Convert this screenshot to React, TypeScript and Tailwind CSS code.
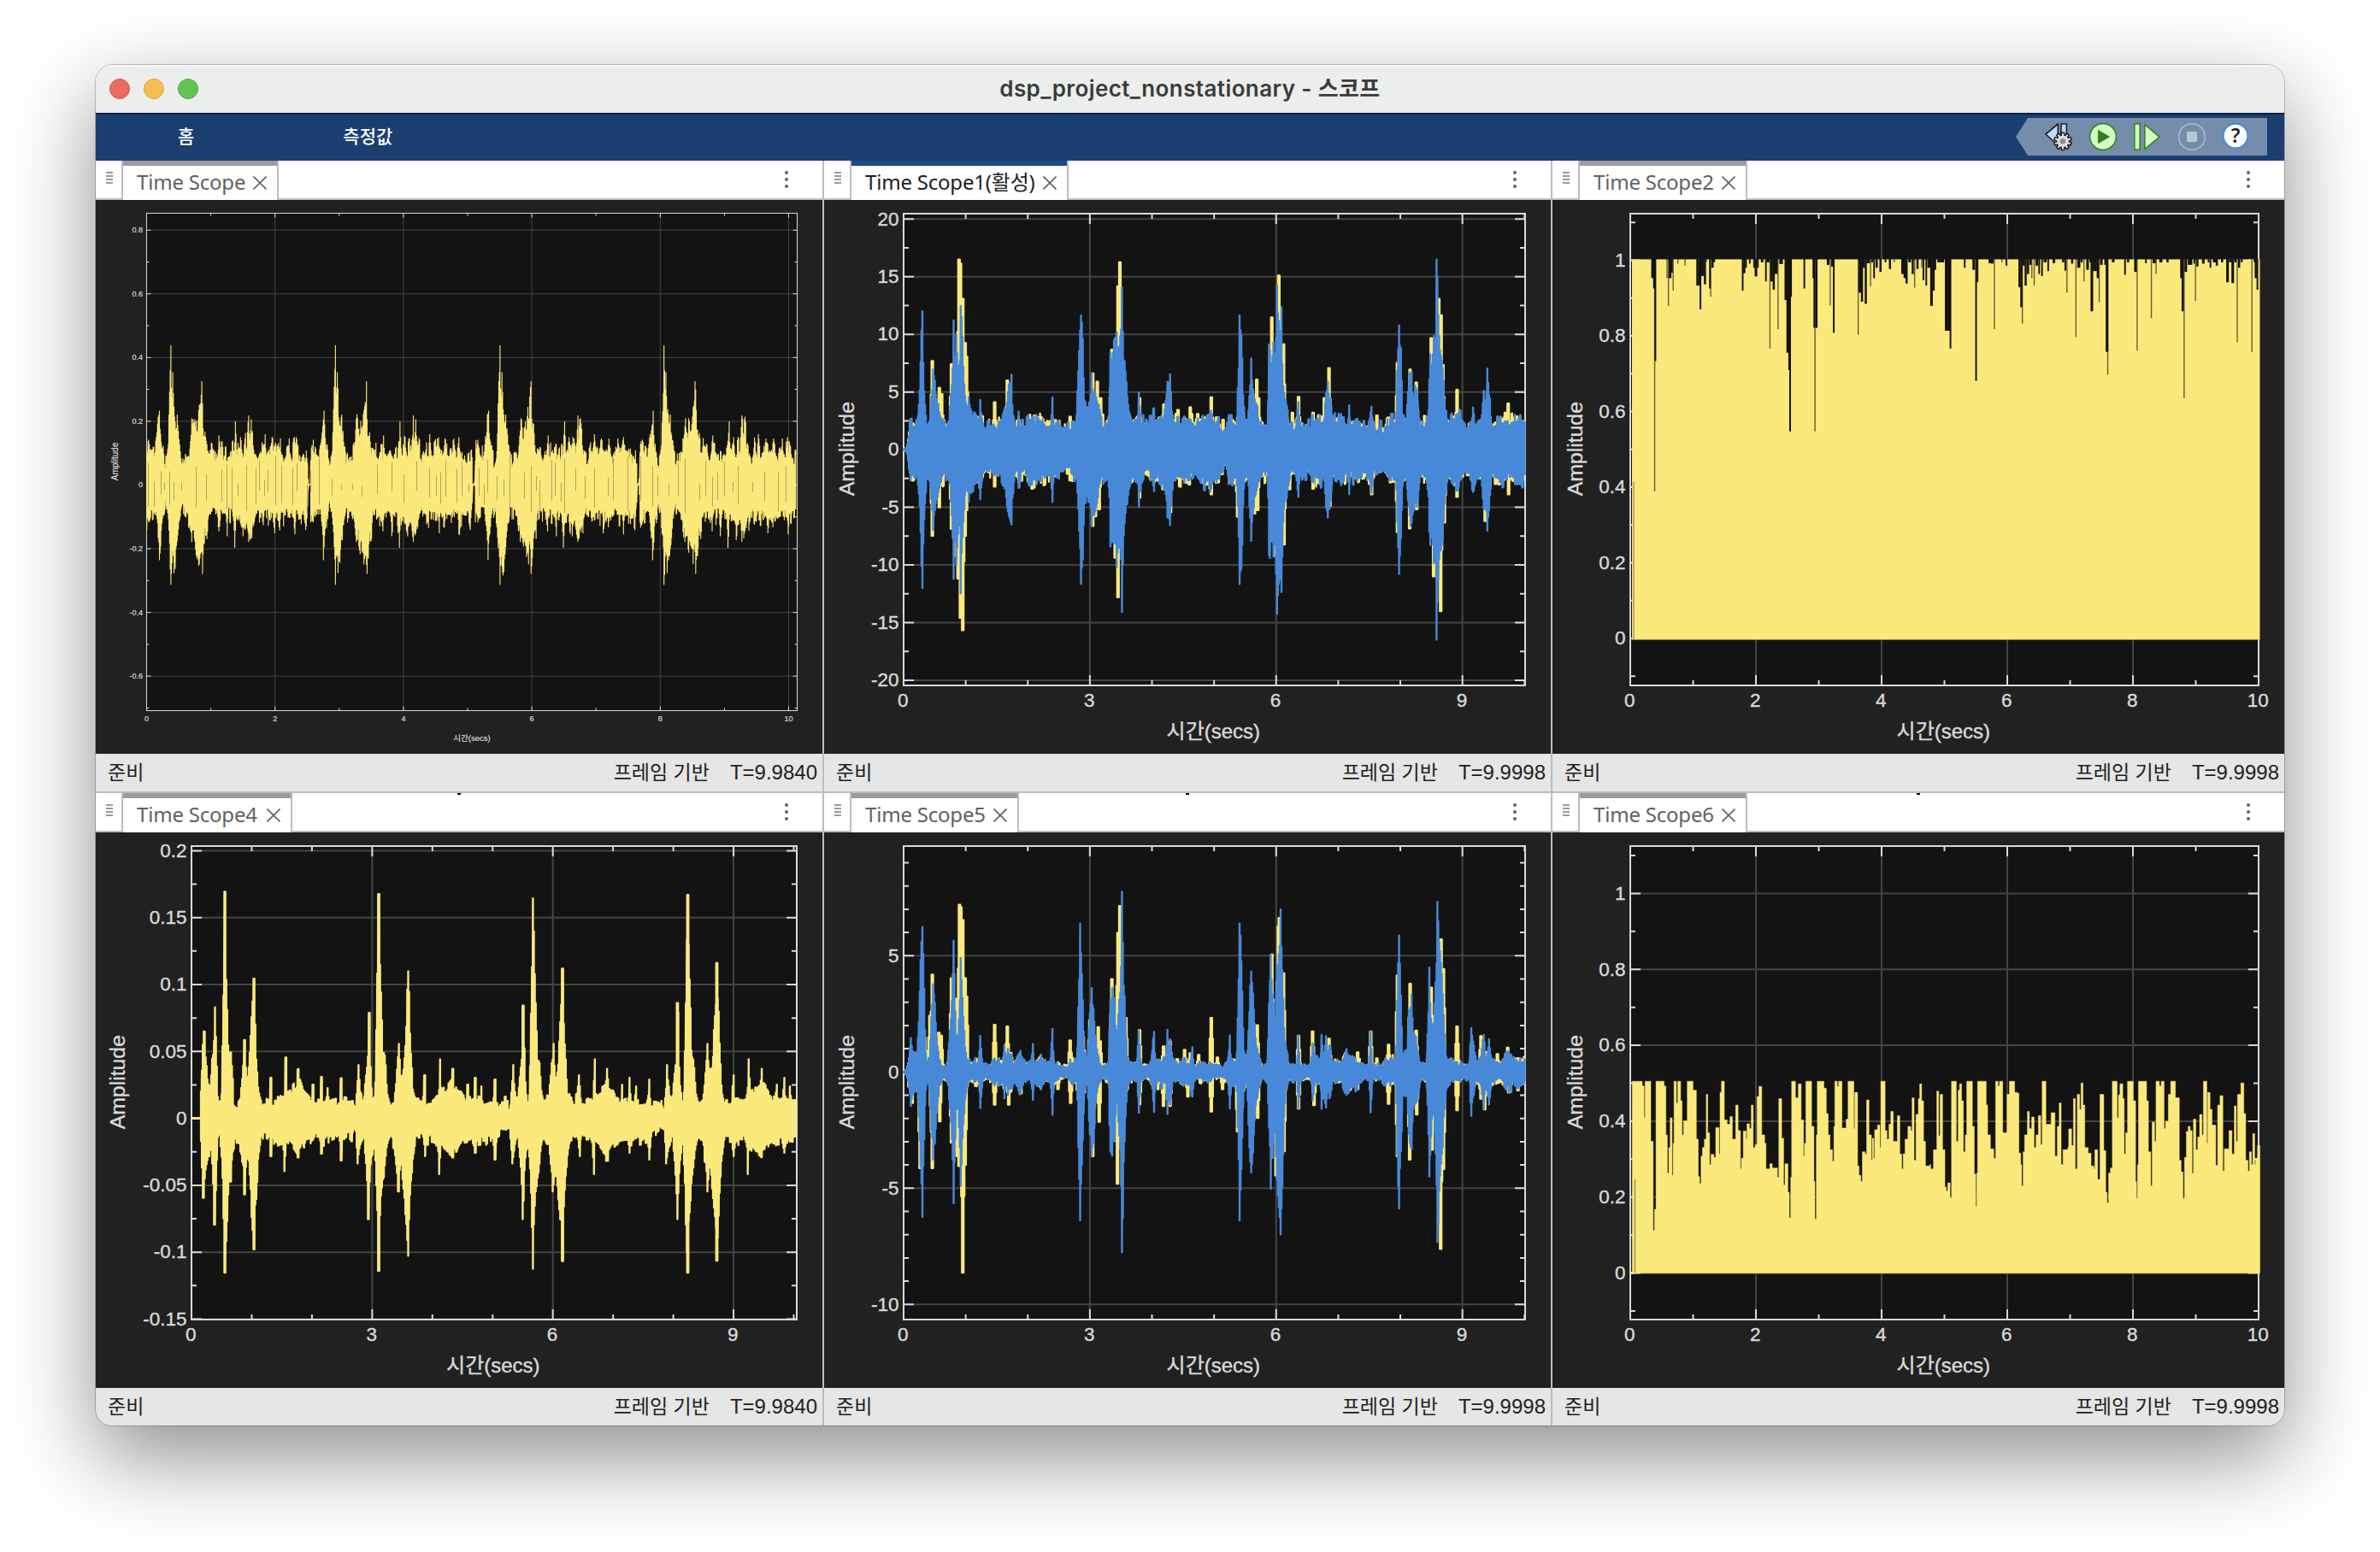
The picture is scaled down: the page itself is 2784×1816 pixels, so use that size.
import React from "react";

type Pt = [number, number];
type Spike = [number, number];

/* Maps recorder units to page units: page = origin + value / scale. */
interface Grid {
  ox: number;
  oy: number;
  sx: number;
  sy: number;
}

function rng(seed: number) {
  let s = seed;
  return () => {
    s = (s * 1664525 + 1013904223) % 4294967296;
    return s / 4294967296;
  };
}

function parse(text: string): Pt[] {
  return text
    .trim()
    .split(/\s+/)
    .map((p) => p.split(":").map(Number) as Pt);
}

function shift(points: Pt[], dx: number): Pt[] {
  return points.map(([x, y]) => [x + dx, y]);
}

/* Reads an envelope column by column; local extremes stay exact, the rest is roughened. */
function sampler(points: Pt[], zero: number, jitter: number, seed: number, step: number) {
  const rand = rng(seed);
  let k = 0;
  let hold = 0;
  let r = rand();
  const peaks = points.filter(([, y], i) => {
    const a = points[i - 1];
    const b = points[i + 1];
    const h = Math.abs(y - zero);
    return a && b && h >= Math.abs(a[1] - zero) && h >= Math.abs(b[1] - zero);
  });
  let p = 0;
  return (x: number) => {
    while (k < points.length - 2 && points[k + 1][0] <= x) k++;
    while (p < peaks.length - 1 && peaks[p][0] < x - step / 2) p++;
    if (hold-- <= 0) {
      r = rand();
      if (rand() < 0.14) r = -0.7 * rand();
      hold = step > 1.5 ? Math.floor(rand() * 3) : Math.floor(rand() * 2);
    }
    if (Math.abs(peaks[p][0] - x) <= step / 2) return peaks[p][1];
    const [x0, y0] = points[k];
    const [x1, y1] = points[k + 1];
    const f = Math.min(1, Math.max(0, (x - x0) / (x1 - x0 || 1)));
    const v = y0 + (y1 - y0) * f;
    const h = Math.abs(v - zero);
    const cut = r * Math.min(h * 0.4, Math.max(jitter, h * (r > 0 ? 0.2 : 0)));
    return v > zero ? v - cut : v + cut;
  };
}

function wave(
  g: Grid,
  zero: number,
  hi: Pt[],
  lo: Pt[],
  from: number,
  to: number,
  step: number,
  jitter: number,
  seed: number,
) {
  const top = sampler(hi, zero, jitter, seed, step);
  const bottom = sampler(lo, zero, jitter, seed + 77, step);
  let d = "";
  for (let x = from; x <= to; x += step) {
    const px = (g.ox + x / g.sx).toFixed(1);
    const a = (g.oy + top(x) / g.sy).toFixed(1);
    const b = (g.oy + bottom(x) / g.sy).toFixed(1);
    d += `${d ? "L" : "M"}${px} ${a}V${b}`;
  }
  return d;
}

function spikes(g: Grid, zero: number, list: Spike[], half = 0.7) {
  return list
    .map(([x, y]) => {
      const px = g.ox + x / g.sx;
      const py = (g.oy + y / g.sy).toFixed(1);
      const mid = (g.oy + (zero + (y - zero) * 0.62) / g.sy).toFixed(1);
      const pz = (g.oy + zero / g.sy).toFixed(1);
      const l = (px - half).toFixed(1);
      const r = (px + half).toFixed(1);
      const wide = half > 0.8;
      const ll = (px - half - 1).toFixed(1);
      const rr = (px + half + 1).toFixed(1);
      return wide ? `M${ll} ${pz}V${mid}H${l}V${py}H${r}V${mid}H${rr}V${pz}Z` : `M${l} ${pz}V${py}H${r}V${pz}Z`;
    })
    .join("");
}

const mirror = (points: Pt[], zero: number): Pt[] => points.map(([x, y]) => [x, 2 * zero - y]);

/* Keeps only the noise floor of an envelope. */
const floorOf = (points: Pt[], zero: number, limit: number): Pt[] =>
  points.map(([x, y]) => [x, zero - Math.min(limit, zero - y)]);

const YELLOW = "#fbe97b";
const BLUE = "#4789d8";
const INK = "#d9d9d9";

/* ---------- Trace data ---------- */

const G1: Grid = { ox: 110, oy: 230, sx: 1.823, sy: 2.2085 };
const beat1Hi = parse(`112:650 117:628 122:650 128:655 134:610 137:560 140:553 143:630 147:635 150:682 155:660 158:640 161:505 164:384 166:470 168:454 170:530 174:572 177:563 180:600 184:640 188:682 195:660 203:655 206:605 209:573 213:605 218:580 221:590 224:538 227:532 230:477 233:597 237:602 240:640 250:645 258:658 264:655 267:617 270:650 280:655 290:660 298:645 302:581 305:645 312:622 317:655 322:625 326:645 330:566 332:630 335:575 338:605 342:640 350:668 358:635 362:655 365:614 368:655 381:625 390:650 397:625 405:665 416:625 422:662 427:622 432:645 440:668 453:656 456:680 457:742 461:742`);
const beat1Lo = parse(`112:842 117:842 122:830 132:825 136:880 139:940 141:905 145:850 152:805 158:850 161:910 164:1003 167:940 170:973 174:945 178:905 182:850 187:820 195:830 204:850 208:893 213:885 218:920 222:935 225:950 228:925 231:975 234:925 237:880 241:885 244:840 250:830 262:835 266:865 269:830 281:835 284:878 287:825 297:840 300:908 303:840 312:850 318:878 325:860 330:892 334:888 340:860 348:830 360:840 370:835 382:840 385:870 388:840 395:855 400:840 412:830 425:835 428:873 431:835 448:835 452:862 456:800 457:745 461:745`);
const repeat = (p: Pt[], period: number, n: number) =>
  Array.from({ length: n }, (_, i) => shift(p, i * period)).flat();
const hi1 = repeat(beat1Hi, 350.7, 4);
const lo1 = repeat(beat1Lo, 350.7, 4);
const trace1 = wave(G1, 745, hi1, lo1, 112.5, 1497, 1.35, 28, 11);

const streaks1 = (() => {
  const rand = rng(5);
  let a = "";
  for (let x = 115; x < 1494; x += 6 + rand() * 26) {
    const px = Math.round(G1.ox + x / G1.sx) + 0.5;
    const y0 = G1.oy + (670 + rand() * 80) / G1.sy;
    const y1 = G1.oy + (755 + rand() * 65) / G1.sy;
    a += `M${px} ${y0.toFixed(1)}V${y1.toFixed(1)}`;
  }
  return a;
})();

const G2: Grid = { ox: 960, oy: 180, sx: 1.823, sy: 2.063 };
const hi2 = parse(`177:713 184:708 187:680 190:645 193:640 200:645 206:640 211:560 214:440 217:380 220:540 223:600 227:650 232:640 236:580 240:520 243:535 246:565 250:590 256:625 262:640 270:650 275:640 278:560 281:490 284:402 287:500 290:437 294:510 296:540 299:367 302:440 305:520 309:605 313:600 316:588 320:612 333:625 337:635 340:594 346:640 355:655 370:650 385:640 393:610 400:560 406:533 410:600 413:648 420:645 423:622 426:645 432:650 440:645 445:635 460:630 470:632 480:640 488:645 491:640 494:588 497:645 508:645 520:660 530:655 545:650 550:520 555:390 558:392 562:575 567:620 573:580 578:530 585:560 592:600 600:640 612:650 615:620 618:480 621:480 626:434 632:430 636:455 640:400 643:322 646:470 652:550 657:610 665:640 673:635 676:630 679:576 683:630 695:655 704:640 707:645 710:614 714:640 725:635 733:610 739:550 742:565 745:532 749:610 755:640 775:635 790:640 800:650 815:630 833:620 840:640 850:645 858:660 863:680 870:630 877:630 887:648 890:540 894:390 898:420 901:580 905:635 911:645 914:560 918:494 922:545 928:590 935:630 942:640 953:650 956:460 960:460 966:455 970:460 974:318 978:380 982:370 986:530 992:590 1000:640 1008:650 1014:650 1018:600 1023:645 1040:655 1052:640 1065:630 1073:640 1077:570 1082:550 1087:600 1091:640 1110:628 1123:645 1127:607 1131:645 1145:640 1160:645 1170:645 1174:610 1179:645 1200:660 1215:640 1227:640 1230:500 1233:414 1237:450 1241:620 1248:645 1253:560 1258:530 1265:560 1272:580 1278:640 1290:650 1296:600 1299:484 1303:520 1308:440 1311:440 1314:255 1317:350 1320:440 1326:480 1331:600 1340:645 1350:630 1360:625 1375:650 1387:650 1391:612 1396:645 1409:640 1413:572 1418:580 1422:518 1427:600 1432:645 1450:635 1465:640 1480:630 1492:630 1503:640`);
const blue2 = wave(G2, 714, hi2, mirror(hi2, 714), 177, 1503, 1.9, 20, 21);
const floor2 = floorOf(hi2, 714, 80);
const yellow2 = wave(G2, 714, floor2, mirror(floor2, 714), 177, 1503, 1.9, 20, 301);
const yHi2: Spike[] = [[238,500],[253,565],[258,580],[279,508],[295,255],[298,265],[303,350],[308,457],[311,490],[371,600],[398,547],[532,635],[580,530],[590,550],[597,590],[621,473],[638,262],[634,320],[680,590],[732,605],[762,618],[788,612],[804,628],[833,588],[846,636],[858,642],[930,545],[934,590],[962,395],[977,294],[987,460],[1006,625],[1019,587],[1050,625],[1074,590],[1084,517],[1186,632],[1212,637],[1230,505],[1257,521],[1270,552],[1288,633],[1302,445],[1318,350],[1323,390],[1327,510],[1357,570],[1415,600],[1460,625],[1466,603]];
const yLo2: Spike[] = [[238,922],[253,853],[279,905],[286,970],[293,1025],[298,1120],[303,1150],[308,922],[311,860],[371,803],[403,872],[451,808],[532,788],[538,790],[580,898],[586,875],[594,858],[628,975],[634,1070],[680,830],[730,810],[746,865],[786,798],[833,822],[856,773],[889,876],[925,868],[932,860],[970,970],[988,943],[1000,810],[1050,808],[1061,795],[1086,850],[1175,822],[1215,793],[1230,913],[1256,904],[1271,858],[1307,1020],[1322,1104],[1330,890],[1357,828],[1417,886],[1439,797],[1447,798],[1467,822]];

const G5: Grid = { ox: 960, oy: 920, sx: 1.823, sy: 2.0103 };
const hi5 = parse(`177:671 184:665 188:630 193:592 198:620 205:625 209:560 214:360 217:331 220:450 223:600 227:655 232:640 236:530 240:466 244:510 248:590 253:640 260:655 270:650 275:600 280:480 284:363 288:560 292:600 296:500 299:404 303:500 308:600 313:635 320:648 336:645 341:587 346:650 360:655 370:640 380:640 388:645 392:610 396:640 400:618 407:620 412:650 425:622 432:640 442:655 448:645 452:606 456:650 470:632 480:650 490:645 494:571 498:645 510:655 525:660 537:640 547:635 550:450 554:323 558:440 562:620 568:650 573:540 578:475 582:500 587:600 592:630 600:655 614:650 617:490 622:475 627:490 631:620 634:560 640:450 643:248 646:430 650:540 654:630 665:655 675:645 679:576 683:650 700:655 706:640 710:578 714:640 730:640 736:630 739:573 743:615 746:595 750:640 760:650 773:640 787:650 792:614 796:655 815:650 830:650 845:655 858:660 868:645 872:586 876:640 887:645 890:500 894:323 898:440 902:620 909:650 914:500 918:436 922:490 928:600 934:620 942:660 953:645 956:510 960:397 964:480 968:560 973:400 977:340 981:290 984:380 988:540 992:620 1000:655 1015:650 1019:587 1023:650 1040:655 1046:650 1050:605 1054:640 1065:640 1069:585 1073:630 1078:588 1083:630 1086:610 1091:645 1110:650 1121:618 1133:630 1145:640 1160:655 1169:655 1173:577 1177:655 1195:655 1205:640 1215:640 1227:640 1230:450 1233:351 1237:440 1241:630 1250:620 1255:510 1260:490 1265:590 1272:600 1280:655 1292:650 1295:560 1298:426 1302:520 1306:600 1311:480 1316:272 1320:380 1325:450 1330:580 1335:640 1350:650 1365:650 1383:655 1387:569 1391:600 1396:640 1408:635 1413:585 1418:630 1426:595 1431:640 1450:650 1468:625 1480:645 1492:640 1503:640`);
const blue5 = wave(G5, 672, hi5, mirror(hi5, 672), 177, 1503, 1.9, 14, 31);
const floor5 = floorOf(hi5, 672, 45);
const yellow5 = wave(G5, 672, floor5, mirror(floor5, 672), 177, 1503, 1.9, 14, 401);
const yHi5: Spike[] = [[222,592],[233,540],[238,443],[252,580],[257,587],[279,452],[288,500],[296,279],[299,285],[303,315],[308,452],[311,495],[371,561],[398,565],[532,598],[560,590],[574,550],[592,567],[596,600],[621,454],[634,345],[638,282],[651,545],[680,574],[731,612],[745,600],[776,620],[788,628],[806,632],[833,545],[846,638],[931,562],[962,396],[976,330],[978,310],[987,440],[1019,587],[1049,577],[1084,594],[1145,626],[1173,577],[1186,640],[1211,608],[1230,445],[1257,465],[1270,575],[1302,474],[1307,540],[1323,360],[1328,430],[1357,565],[1408,588],[1443,630],[1465,615]];
const yLo5: Spike[] = [[195,745],[212,898],[236,800],[238,898],[254,788],[279,838],[285,860],[291,870],[295,893],[303,1144],[308,890],[371,749],[401,749],[427,722],[506,712],[533,745],[562,720],[580,870],[594,789],[633,935],[680,748],[731,752],[745,752],[783,730],[833,765],[857,712],[889,812],[932,780],[962,818],[971,915],[988,858],[1019,758],[1052,750],[1145,712],[1211,747],[1230,870],[1256,878],[1271,772],[1304,855],[1322,1088],[1328,900],[1357,762],[1416,760],[1408,735],[1467,720],[1487,715]];

const G4: Grid = { ox: 110, oy: 920, sx: 1.823, sy: 2.0103 };
const hi4 = [
  ...parse(`228:700 232:600 235:577 238:625 243:680 246:690 250:680 254:600 258:520 261:600 264:720 268:750 272:720 276:430 279:248 283:460 287:640 291:626 295:650 298:735 305:745 312:733 317:680 321:597 325:660 329:680 333:620 336:545 341:453 345:600 350:700 355:735 365:738 374:735 377:686 380:735 390:740 397:725 406:720 409:638 412:715 425:705 432:690 436:665 440:690 447:715 455:720 464:730 467:702 470:735 482:735 485:684 488:735 495:735 498:710 501:735 515:735 524:735 527:687 530:738 540:740 550:740 555:760`),
  ...repeat(parse(`557:765 560:720 564:656 568:715 575:730 579:680 583:640 587:533 591:700 597:750 600:700 604:430 607:264 611:440 616:610 621:626 625:710 632:740 640:735 645:680 650:606 655:680 660:640 666:540 670:435 675:580 680:710 687:735 700:735 702:730 705:680 708:735 720:735 735:725 738:642 741:715 754:708 762:700 765:665 768:700 780:715 794:735 797:702 800:735 810:730 813:686 816:735 823:735 826:706 829:735 850:738 855:690 858:738 872:740 881:740 885:760`), 329.2, 3),
];
const lo4 = [
  ...parse(`228:850 233:968 238:910 244:870 250:850 254:960 257:1031 260:950 264:840 268:830 273:900 276:1050 279:1144 283:1050 288:930 291:930 295:880 300:830 310:830 317:900 321:960 325:900 329:880 335:1000 341:1089 345:980 350:880 356:830 366:825 374:830 377:870 380:830 393:845 403:840 406:905 410:835 425:855 435:873 443:850 450:840 462:840 470:825 481:835 485:864 489:835 500:838 515:828 523:830 527:880 531:828 545:825 550:835 555:815`),
  ...repeat(parse(`557:800 562:887 567:850 575:830 581:900 585:1018 590:900 597:830 600:900 604:1040 607:1135 612:1000 618:930 624:860 630:830 641:850 649:953 655:900 660:960 666:1030 670:1104 674:1000 680:880 686:830 702:830 706:870 710:835 728:835 733:850 736:912 739:840 753:860 765:873 775:858 790:840 809:840 813:862 817:840 851:835 855:878 859:828 885:805`), 329.2, 3),
];
const trace4 = wave(G4, 781, hi4, lo4, 228, 1497, 2, 16, 41);
const spikes4 = spikes(G4, 781, [[607,254],[1266,256],[999,429],[1328,416],[915,516],[1244,510],[607,1140],[1266,1144],[999,1117],[1328,1116]]);

const G3: Grid = { ox: 1810, oy: 180, sx: 1.802, sy: 2.063 };
const dips3: [number, number, number][] = [[219,4,300],[223,4,325],[225,2,815],[226,3,500],[251,2,300],[254,2,367],[256,5,300],[260,4,287],[264,2,330],[274,2,265],[289,2,270],[314,4,318],[318,4,318],[321,3,375],[324,6,295],[330,4,315],[334,2,262],[341,3,325],[343,2,345],[346,4,275],[350,3,262],[410,3,330],[413,4,288],[417,3,275],[425,3,265],[434,3,275],[437,5,296],[442,3,275],[450,5,262],[459,3,308],[462,6,262],[468,2,470],[470,5,308],[475,4,328],[479,6,290],[485,2,423],[489,7,266],[500,5,353],[504,6,480],[508,4,522],[510,3,670],[512,3,345],[540,3,325],[559,3,300],[561,3,420],[563,2,670],[565,4,420],[589,5,268],[595,2,366],[598,4,272],[602,3,432],[654,2,437],[656,5,335],[661,4,357],[665,4,275],[669,4,362],[673,7,264],[680,2,320],[683,3,262],[687,3,300],[692,4,275],[700,4,285],[711,3,262],[720,4,278],[730,2,262],[746,5,290],[751,4,300],[755,4,313],[761,5,262],[768,4,290],[773,2,323],[778,4,278],[788,2,275],[791,3,305],[797,3,318],[801,6,275],[807,5,367],[812,4,330],[816,3,280],[822,14,262],[838,11,427],[848,3,470],[878,3,275],[896,5,280],[902,3,548],[905,3,310],[930,5,264],[935,5,265],[941,2,423],[957,2,262],[966,3,270],[993,4,322],[997,4,370],[1000,2,410],[1002,4,270],[1006,4,318],[1011,4,290],[1016,4,268],[1020,2,300],[1025,2,318],[1029,5,270],[1035,3,290],[1041,3,295],[1046,6,262],[1054,3,283],[1065,5,264],[1085,4,262],[1090,3,282],[1094,2,335],[1104,4,265],[1113,2,442],[1117,6,275],[1124,4,262],[1130,2,308],[1136,5,280],[1143,3,262],[1145,5,380],[1150,8,283],[1158,4,300],[1162,2,358],[1165,5,268],[1174,3,268],[1177,5,478],[1180,2,533],[1190,5,262],[1216,3,292],[1222,4,262],[1237,5,285],[1242,2,475],[1260,3,264],[1272,2,397],[1276,6,264],[1282,2,290],[1290,6,262],[1305,4,262],[1334,4,300],[1337,4,380],[1341,2,590],[1343,5,285],[1350,9,268],[1362,3,265],[1365,2,355],[1368,4,272],[1380,5,265],[1392,3,262],[1396,3,275],[1403,6,262],[1409,4,270],[1420,4,262],[1431,5,310],[1437,5,262],[1442,5,312],[1448,4,262],[1453,2,455],[1456,4,275],[1462,3,262],[1484,2,478],[1489,4,262],[1491,4,300],[1495,3,328]];

const G6: Grid = { ox: 1810, oy: 920, sx: 1.802, sy: 2.0103 };
const steps6 = parse(`179:694 200:705 204:780 206:694 218:835 223:1045 226:995 229:694 246:705 250:820 253:910 256:850 259:780 263:915 265:840 267:694 272:745 275:694 281:740 284:820 287:787 295:694 307:715 314:830 318:918 321:935 324:870 327:850 331:830 335:725 338:815 342:890 345:866 351:873 355:803 362:865 364:720 367:694 373:785 379:795 385:777 390:830 397:750 402:810 407:900 409:875 413:811 419:830 421:794 426:805 430:750 434:850 438:843 442:730 446:706 452:820 458:840 461:900 469:888 474:898 485:920 488:735 494:828 498:938 501:888 507:955 510:1015 513:920 515:694 523:733 529:700 535:785 540:870 542:840 545:694 557:800 562:930 564:1018 567:820 569:694 583:710 588:770 592:820 596:855 601:882 604:800 606:694 611:706 614:694 621:804 630:783 634:694 646:805 648:720 654:893 657:915 661:930 664:860 670:865 673:738 678:820 683:880 685:828 688:875 690:808 696:797 701:850 703:694 712:810 716:830 720:795 724:765 729:835 738:775 743:865 747:900 750:865 754:830 760:800 766:810 769:733 773:880 777:772 782:735 785:700 789:740 793:835 797:893 806:890 808:900 814:855 821:717 825:822 828:725 833:855 838:943 841:952 844:933 849:968 852:694 862:835 866:715 869:700 873:740 877:860 881:820 884:694 896:800 900:912 903:988 905:910 907:694 925:750 928:820 934:853 941:875 945:694 950:705 953:694 960:815 969:725 974:694 985:720 991:722 994:863 998:890 1000:940 1003:860 1006:820 1012:765 1016:805 1021:778 1026:850 1030:820 1035:775 1040:843 1043:694 1051:795 1062:768 1070:870 1075:800 1079:745 1083:890 1087:855 1097:850 1099:806 1105:845 1109:735 1113:900 1117:725 1122:760 1125:698 1129:750 1133:850 1140:863 1146:893 1152:900 1154:855 1160:925 1165:725 1173:857 1177:955 1180:980 1183:910 1187:898 1191:694 1201:780 1204:726 1207:700 1213:735 1216:865 1219:815 1223:694 1235:740 1240:930 1242:970 1244:890 1246:694 1263:740 1267:860 1272:940 1275:790 1280:835 1283:694 1290:705 1294:694 1300:805 1303:788 1309:725 1314:694 1324:733 1332:880 1336:907 1340:970 1343:873 1347:812 1351:800 1355:810 1359:910 1362:783 1367:855 1371:825 1375:772 1380:820 1383:694 1390:840 1392:720 1397:760 1401:797 1409:892 1413:750 1418:728 1424:905 1427:853 1437:810 1443:865 1448:752 1452:835 1455:725 1462:698 1468:770 1472:880 1477:905 1480:860 1484:890 1487:817 1491:890 1493:875 1497:845 1502:845`);
const area6 = (() => {
  const base = G6.oy + 1145.5 / G6.sy;
  let d = `M${G6.ox + 179 / G6.sx} ${base}`;
  for (const [x, y] of steps6) d += `H${(G6.ox + x / G6.sx).toFixed(1)}V${(G6.oy + y / G6.sy).toFixed(1)}`;
  return `${d}V${base}Z`;
})();

/* ---------- Chart ---------- */

interface AxisSpec {
  zero: number;
  unit: number;
  major: [number, string][];
  minor: number[];
}

interface ChartSpec {
  view: [number, number, number, number];
  box: [number, number, number, number];
  x: AxisSpec;
  y: AxisSpec;
  small?: boolean;
  nameX: number;
}

const range = (from: number, to: number, step: number) =>
  Array.from({ length: Math.round((to - from) / step) + 1 }, (_, i) => from + i * step);

function Chart({ spec, children }: { spec: ChartSpec; children: React.ReactNode }) {
  const { view, box, x, y, small, nameX } = spec;
  const [l, t, r, b] = box;
  const w = small ? 1 : 2;
  const big = small ? 5 : 12;
  const tiny = small ? 3 : 6;
  const fs = small ? 9 : 22.5;
  const fx = (v: number) => x.zero + v * x.unit;
  const fy = (v: number) => y.zero - v * y.unit;
  const ticks =
    x.major.map(([v]) => `M${fx(v)} ${t}v${big}M${fx(v)} ${b}v${-big}`).join("") +
    x.minor.map((v) => `M${fx(v)} ${t}v${tiny}M${fx(v)} ${b}v${-tiny}`).join("") +
    y.major.map(([v]) => `M${l} ${fy(v)}h${big}M${r} ${fy(v)}h${-big}`).join("") +
    y.minor.map((v) => `M${l} ${fy(v)}h${tiny}M${r} ${fy(v)}h${-tiny}`).join("");
  const grid =
    x.major.map(([v]) => `M${fx(v)} ${t}V${b}`).join("") + y.major.map(([v]) => `M${l} ${fy(v)}H${r}`).join("");
  const midY = (t + b) / 2;
  return (
    <svg
      viewBox={view.join(" ")}
      width={view[2]}
      height={view[3]}
      className="block shrink-0 bg-[#212121] font-['Liberation_Sans','Noto_Sans_CJK_KR',sans-serif]"
    >
      <rect x={l} y={t} width={r - l} height={b - t} fill="#131313" />
      <path d={grid} stroke="#444444" strokeWidth={w} fill="none" />
      <path d={ticks} stroke={INK} strokeWidth={w} fill="none" />
      <rect x={l} y={t} width={r - l} height={b - t} fill="none" stroke={INK} strokeWidth={w} />
      {children}
      <g fill={INK} stroke={INK} strokeWidth={small ? 0.2 : 0.4}>
        {x.major.map(([v, s]) => (
          <text key={s} x={fx(v) - (small ? 0 : 0.7)} y={b + (small ? 12 : 24.5)} fontSize={fs} textAnchor="middle">
            {s}
          </text>
        ))}
        {y.major.map(([v, s]) => (
          <text key={s} x={l - (small ? 4.5 : 5.5)} y={fy(v) + fs * 0.355 - (small ? 0.3 : 0.7)} fontSize={fs} textAnchor="end">
            {s}
          </text>
        ))}
        <text x={(l + r) / 2 - (small ? 0 : 1.2)} y={b + (small ? 35 : 62)} fontSize={small ? 9.5 : 24} textAnchor="middle">
          시간(secs)
        </text>
        <text
          transform={`translate(${nameX} ${midY - (small ? 0.5 : 0.8)}) rotate(-90)`}
          fontSize={small ? 10 : 24.8}
          textAnchor="middle"
        >
          Amplitude
        </text>
      </g>
    </svg>
  );
}

const xThirds = (zero: number, unit: number): AxisSpec => ({
  zero,
  unit,
  major: [[0, "0"], [3, "3"], [6, "6"], [9, "9"]],
  minor: [1, 2, 4, 5, 7, 8, 10],
});
const xTwos = (zero: number, unit: number): AxisSpec => ({
  zero,
  unit,
  major: [[0, "0"], [2, "2"], [4, "4"], [6, "6"], [8, "8"], [10, "10"]],
  minor: [1, 3, 5, 7, 9],
});

const spec1: ChartSpec = {
  view: [112, 234, 850, 648],
  box: [171.5, 249.5, 932.5, 831.5],
  small: true,
  nameX: 137.5,
  x: xTwos(171.5, 75.1),
  y: {
    zero: 567.5,
    unit: 372.8,
    major: [[0.8, "0.8"], [0.6, "0.6"], [0.4, "0.4"], [0.2, "0.2"], [0, "0"], [-0.2, "-0.2"], [-0.4, "-0.4"], [-0.6, "-0.6"]],
    minor: range(-0.7, 0.7, 0.2),
  },
};
const spec2: ChartSpec = {
  view: [964, 234, 850, 648],
  box: [1057, 250, 1784, 802],
  nameX: 999,
  x: xThirds(1057, 72.63),
  y: {
    zero: 526.1,
    unit: 13.49,
    major: [20, 15, 10, 5, 0, -5, -10, -15, -20].map((v) => [v, String(v)] as [number, string]),
    minor: range(-17.5, 17.5, 5),
  },
};
const spec3: ChartSpec = {
  view: [1816, 234, 856, 648],
  box: [1907, 250, 2642, 802],
  nameX: 1850.5,
  x: xTwos(1907, 73.5),
  y: {
    zero: 747.1,
    unit: 442.5,
    major: [[1, "1"], [0.8, "0.8"], [0.6, "0.6"], [0.4, "0.4"], [0.2, "0.2"], [0, "0"]],
    minor: range(-0.1, 1.1, 0.2),
  },
};
const spec4: ChartSpec = {
  view: [112, 974, 850, 650],
  box: [224, 990, 932, 1544],
  nameX: 146,
  x: xThirds(224, 70.45),
  y: {
    zero: 1308.6,
    unit: 1566,
    major: [[0.2, "0.2"], [0.15, "0.15"], [0.1, "0.1"], [0.05, "0.05"], [0, "0"], [-0.05, "-0.05"], [-0.1, "-0.1"], [-0.15, "-0.15"]],
    minor: range(-0.125, 0.175, 0.05),
  },
};
const spec5: ChartSpec = {
  view: [964, 974, 850, 650],
  box: [1057, 990, 1784, 1544],
  nameX: 999,
  x: xThirds(1057, 72.63),
  y: {
    zero: 1254.3,
    unit: 27.2,
    major: [[5, "5"], [0, "0"], [-5, "-5"], [-10, "-10"]],
    minor: [9, 8, 7, 6, 4, 3, 2, 1, -1, -2, -3, -4, -6, -7, -8, -9],
  },
};
const spec6: ChartSpec = {
  view: [1816, 974, 856, 650],
  box: [1907, 990, 2642, 1544],
  nameX: 1850.5,
  x: xTwos(1907, 73.5),
  y: {
    zero: 1489.6,
    unit: 444.2,
    major: [[1, "1"], [0.8, "0.8"], [0.6, "0.6"], [0.4, "0.4"], [0.2, "0.2"], [0, "0"]],
    minor: range(-0.1, 1.1, 0.2),
  },
};

/* ---------- Window chrome ---------- */

function Panel({
  tab,
  tabWidth,
  time,
  active,
  second,
  last,
  children,
}: {
  tab: string;
  tabWidth: string;
  time: string;
  active?: boolean;
  second?: boolean;
  last?: boolean;
  children: React.ReactNode;
}) {
  return (
    <section className={`relative flex flex-col ${last ? "w-[856px]" : "w-[852px] border-r-2 border-[#bdbdbd]"}`}>
      {second && <span className="absolute left-1/2 top-0 h-0.5 w-1 -translate-x-1/2 bg-black" />}
      <div className="flex h-[46px] bg-white">
        <div className="flex w-[30px] flex-col gap-0.5 border-b-2 border-[#bdbdbd] pl-3 pt-[13px]">
          <span className="h-0.5 w-2 bg-[#9a9a9a]" />
          <span className="h-0.5 w-2 bg-[#9a9a9a]" />
          <span className="h-0.5 w-2 bg-[#9a9a9a]" />
          <span className="h-0.5 w-2 bg-[#9a9a9a]" />
        </div>
        <div className={`flex flex-col border-x-2 border-[#bdbdbd] ${tabWidth}`}>
          <div className={`h-1.5 ${active ? "bg-[#1d4a82]" : "bg-[#9b9b9b]"}`} />
          <div className="flex flex-1 items-center justify-between pb-0.5 pl-4 pr-3">
            <span
              className={`whitespace-nowrap font-['Noto_Sans','Noto_Sans_CJK_KR',sans-serif] text-[24px] leading-none tracking-[-0.2px] ${active ? "text-[#212121]" : "text-[#616161]"}`}
            >
              {tab}
            </span>
            <svg viewBox="0 0 16 16" className="mt-0.5 size-4" stroke="#616161" strokeWidth="1.6" fill="none">
              <path d="M0.5 0.5 15.5 15.5M15.5 0.5 0.5 15.5" />
            </svg>
          </div>
        </div>
        <div className="flex flex-1 flex-col items-end gap-1 border-b-2 border-[#bdbdbd] pr-10 pt-3">
          <span className="size-1 rounded-full bg-[#616161]" />
          <span className="size-1 rounded-full bg-[#616161]" />
          <span className="size-1 rounded-full bg-[#616161]" />
        </div>
      </div>
      {children}
      <footer className="flex h-11 items-center bg-[#e6e6e6] pl-3.5 pr-1.5 font-['Liberation_Sans','Noto_Sans_CJK_KR',sans-serif] text-[23px] leading-none text-[#212121]">
        <span>준비</span>
        <span className="ml-auto">프레임 기반</span>
        <span className="ml-6 text-[24px]">{time}</span>
      </footer>
      {!second && <div className="h-0.5 bg-[#bdbdbd]" />}
    </section>
  );
}

const GEAR = (() => {
  const n = 10;
  let d = "";
  for (let i = 0; i < n; i++) {
    const a = (i * 2 * Math.PI) / n - Math.PI / 2;
    const p = (r: number, o: number) => `${(339 + r * Math.cos(a + o)).toFixed(1)} ${(316 + r * Math.sin(a + o)).toFixed(1)}`;
    d += `${i ? "L" : "M"}${p(22, -0.25)}L${p(31, -0.16)}L${p(31, 0.16)}L${p(22, 0.25)}`;
  }
  return `${d}Z`;
})();

function QuickBar() {
  return (
    <svg viewBox="174 234 882 132" width="294" height="44" className="block">
      <path d="M174 300 216 234H1056V366H216Z" fill="#768cab" />
      <g stroke="#212121" strokeWidth="5" strokeLinejoin="round" fill="#bfdcfb">
        <path d="M279 291 322 255V330Z" />
        <rect x="333" y="255" width="19" height="45" />
        <path d={GEAR} fill="#dedede" strokeWidth="4.5" />
      </g>
      <circle cx="339" cy="316" r="10" fill="#8f8f8f" />
      <circle cx="480" cy="300" r="46" fill="#d5fdc1" stroke="#37852a" strokeWidth="5" />
      <path d="M463 277 503 300 463 323Z" fill="#2f7d22" stroke="#2f7d22" strokeWidth="2" />
      <g fill="#d5fdc1" stroke="#37852a" strokeWidth="5">
        <rect x="590.5" y="254.5" width="19" height="91" />
        <path d="M626.5 257V344L678 300.5Z" strokeLinejoin="round" />
      </g>
      <circle cx="792" cy="300" r="46" fill="none" stroke="#b1bece" strokeWidth="4.5" />
      <rect x="774" y="282" width="36" height="36" rx="3" fill="#bac5d5" />
      <circle cx="945" cy="297" r="42.5" fill="#ffffff" stroke="#3f8ae0" strokeWidth="5" />
      <text
        x="945"
        y="322"
        fontSize="69"
        fill="#212121"
        textAnchor="middle"
        className="font-['Noto_Sans',sans-serif] font-semibold"
      >
        ?
      </text>
    </svg>
  );
}

export default function App() {
  return (
    <div className="h-[1816px] w-[2784px] overflow-hidden bg-white px-28 pt-[76px]">
      <main className="h-[1592px] w-[2560px] rounded-[20px] shadow-[0_36px_100px_rgba(0,0,0,0.45),0_0_0_1px_rgba(0,0,0,0.22)]">
        <div className="flex h-full flex-col overflow-hidden rounded-[20px]">
          <header className="grid h-14 grid-cols-[1fr_auto_1fr] items-center border-t-2 border-[#f8f8f8] bg-[#eceeed] px-4 pb-0.5">
            <div className="flex gap-4">
              <span className="size-6 rounded-full border border-[#d6574c] bg-[#ed6a5e]" />
              <span className="size-6 rounded-full border border-[#dba53c] bg-[#f5bf4f]" />
              <span className="size-6 rounded-full border border-[#51a73e] bg-[#61c554]" />
            </div>
            <h1 className="pb-px font-['Inter','Noto_Sans_CJK_KR',sans-serif] text-[26px] font-semibold leading-none tracking-[0.4px] text-[#3b3b3b]">
              dsp_project_nonstationary - 스코프
            </h1>
          </header>
          <nav className="flex h-14 items-center border-t-2 border-[#061c49] bg-[#1a3e70] pb-0.5 pl-24 pr-5 font-['Noto_Sans_CJK_KR',sans-serif] text-[21px] font-medium leading-none text-white">
            <span className="pb-1">홈</span>
            <span className="ml-[174px] pb-1">측정값</span>
            <div className="ml-auto">
              <QuickBar />
            </div>
          </nav>
          <div className="flex">
            <Panel tab="Time Scope" tabWidth="w-[184px]" time="T=9.9840">
              <Chart spec={spec1}>
                <path d={trace1} stroke={YELLOW} strokeWidth="1.1" fill="none" />
                <path d={streaks1} stroke="#131313" strokeOpacity="0.45" strokeWidth="0.7" fill="none" />
              </Chart>
            </Panel>
            <Panel tab="Time Scope1(활성)" tabWidth="w-[256px]" time="T=9.9998" active>
              <Chart spec={spec2}>
                <path d={yellow2} stroke={YELLOW} strokeWidth="2.4" strokeLinejoin="round" fill="none" />
                <path
                  d={spikes(G2, 714, yHi2, 0.9) + spikes(G2, 714, yLo2, 0.9)}
                  stroke={YELLOW}
                  strokeWidth="2.4"
                  strokeLinejoin="round"
                  fill={YELLOW}
                />
                <path d={blue2} stroke={BLUE} strokeWidth="2.4" strokeLinejoin="round" fill="none" />
              </Chart>
            </Panel>
            <Panel tab="Time Scope2" tabWidth="w-[198px]" time="T=9.9998" last>
              <Chart spec={spec3}>
                <rect x="1909" y="303.5" width="734.5" height="445" fill={YELLOW} />
                {dips3.map(([x, w, y]) => (
                  <rect
                    key={`${x}-${y}`}
                    x={G3.ox + x / G3.sx}
                    y="303"
                    width={(w + 0.5) / G3.sx}
                    height={G3.oy + y / G3.sy - 303}
                    fill="#131313"
                    fillOpacity={w < 3 ? 0.65 : 1}
                  />
                ))}
                <path d="M1911 564V748" stroke="#7a7345" strokeWidth="1" />
              </Chart>
            </Panel>
          </div>
          <div className="flex">
            <Panel tab="Time Scope4" tabWidth="w-[200px]" time="T=9.9840" second>
              <Chart spec={spec4}>
                <path d="M224 1308.5H236" stroke={YELLOW} strokeWidth="3" />
                <path d={trace4 + spikes4} stroke={YELLOW} strokeWidth="2.4" strokeLinejoin="round" fill="none" />
              </Chart>
            </Panel>
            <Panel tab="Time Scope5" tabWidth="w-[198px]" time="T=9.9998" second>
              <Chart spec={spec5}>
                <path d={yellow5} stroke={YELLOW} strokeWidth="2.4" strokeLinejoin="round" fill="none" />
                <path
                  d={spikes(G5, 672, yHi5, 0.9) + spikes(G5, 672, yLo5, 0.9)}
                  stroke={YELLOW}
                  strokeWidth="2.4"
                  strokeLinejoin="round"
                  fill={YELLOW}
                />
                <path d={blue5} stroke={BLUE} strokeWidth="2.4" strokeLinejoin="round" fill="none" />
              </Chart>
            </Panel>
            <Panel tab="Time Scope6" tabWidth="w-[198px]" time="T=9.9998" second last>
              <Chart spec={spec6}>
                <path d={area6} fill={YELLOW} stroke={YELLOW} strokeWidth="0.5" />
                <path d="M1912.5 1380V1489" stroke="#7a7345" strokeWidth="1" />
                <path d="M1907 1489.5H1912" stroke={YELLOW} strokeWidth="2.5" />
              </Chart>
            </Panel>
          </div>
        </div>
      </main>
    </div>
  );
}
